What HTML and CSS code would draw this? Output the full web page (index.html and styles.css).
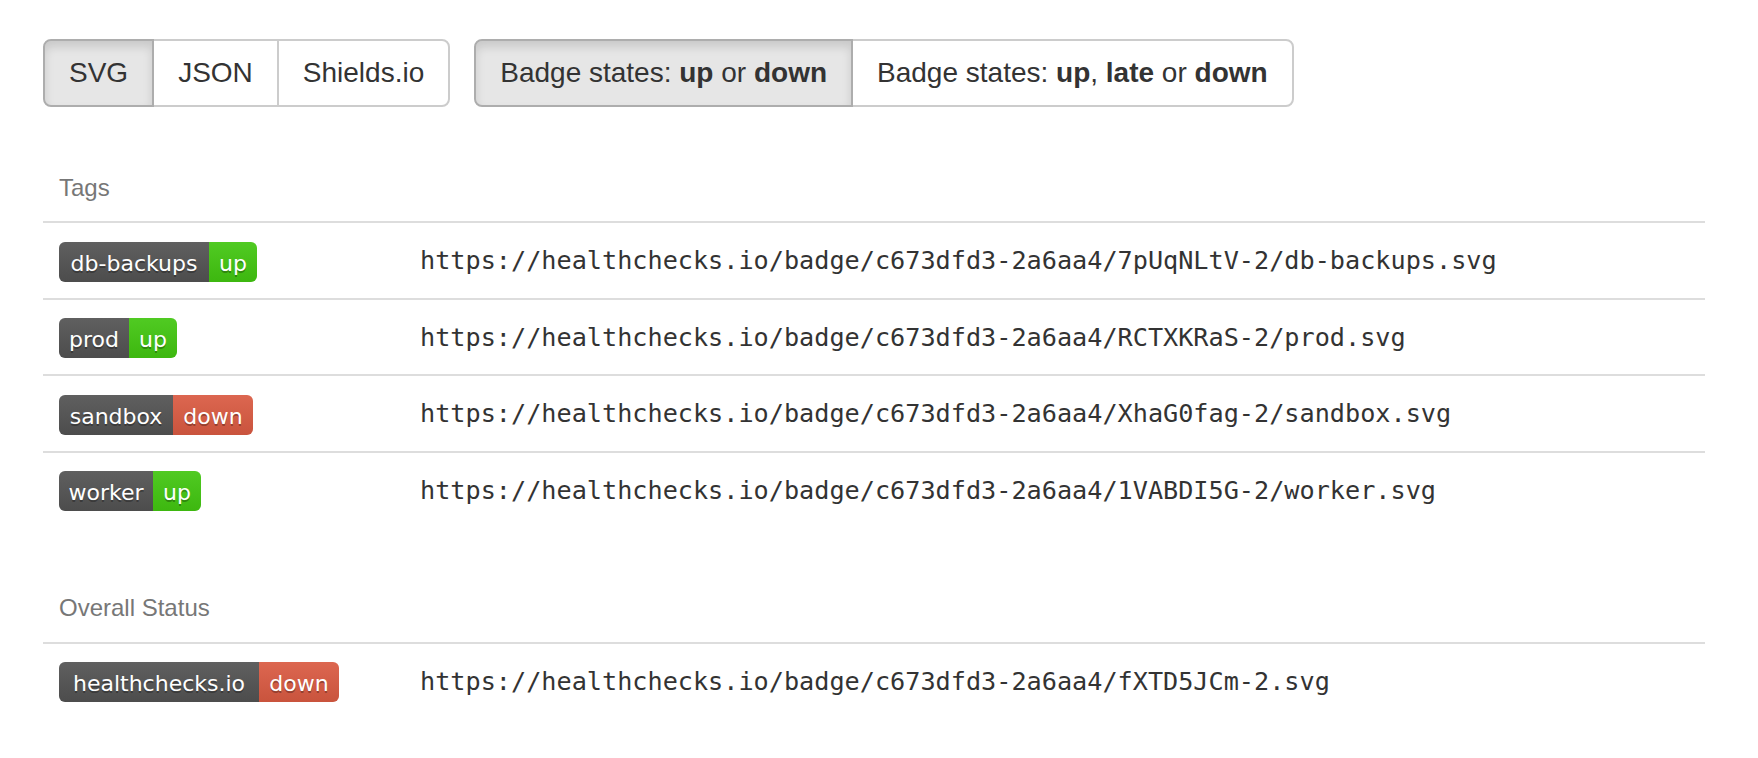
FILE: index.html
```html
<!DOCTYPE html>
<html lang="en">
<head>
<meta charset="utf-8">
<title>Badges</title>
<link rel="stylesheet" href="styles.css">
</head>
<body>
<div class="page">
  <div class="toolbar">
    <div class="btn-group">
      <button class="btn active">SVG</button>
      <button class="btn">JSON</button>
      <button class="btn">Shields.io</button>
    </div>
    <div class="btn-group">
      <button class="btn active">Badge states: <b>up</b> or <b>down</b></button>
      <button class="btn">Badge states: <b>up</b>, <b>late</b> or <b>down</b></button>
    </div>
  </div>

  <table class="badges">
    <colgroup><col class="col-badge"><col></colgroup>
    <tr><th colspan="2">Tags</th></tr>
    <tr>
      <td><div class="badge"><span class="label" style="width:150px">db-backups</span><span class="up" style="width:48px">up</span></div></td>
      <td class="url"><code>https://healthchecks.io/badge/c673dfd3-2a6aa4/7pUqNLtV-2/db-backups.svg</code></td>
    </tr>
    <tr>
      <td><div class="badge"><span class="label" style="width:70px">prod</span><span class="up" style="width:48px">up</span></div></td>
      <td class="url"><code>https://healthchecks.io/badge/c673dfd3-2a6aa4/RCTXKRaS-2/prod.svg</code></td>
    </tr>
    <tr>
      <td><div class="badge"><span class="label" style="width:114px">sandbox</span><span class="down" style="width:80px">down</span></div></td>
      <td class="url"><code>https://healthchecks.io/badge/c673dfd3-2a6aa4/XhaG0fag-2/sandbox.svg</code></td>
    </tr>
    <tr>
      <td><div class="badge"><span class="label" style="width:94px">worker</span><span class="up" style="width:48px">up</span></div></td>
      <td class="url"><code>https://healthchecks.io/badge/c673dfd3-2a6aa4/1VABDI5G-2/worker.svg</code></td>
    </tr>
    <tr><th colspan="2">Overall Status</th></tr>
    <tr>
      <td><div class="badge"><span class="label" style="width:200px">healthchecks.io</span><span class="down" style="width:80px">down</span></div></td>
      <td class="url"><code>https://healthchecks.io/badge/c673dfd3-2a6aa4/fXTD5JCm-2.svg</code></td>
    </tr>
  </table>
</div>
</body>
</html>
```

FILE: styles.css
```css
html, body {
  margin: 0;
  background: #fff;
}

body {
  font-family: "Liberation Sans", Arial, sans-serif;
  font-size: 28px;
  line-height: 40px;
  color: #333;
}

.page {
  padding: 39px 53px 0 43px;
}

.toolbar {
  display: flex;
  gap: 24px;
}

.btn-group {
  display: flex;
}

.btn {
  font: inherit;
  line-height: 40px;
  color: #333;
  background: #fff;
  border: 2px solid #ccc;
  border-radius: 0;
  padding: 12px 24px;
  margin: 0;
  cursor: pointer;
}

.btn + .btn {
  margin-left: -2px;
}

.btn:first-child {
  border-radius: 8px 0 0 8px;
}

.btn:last-child {
  border-radius: 0 8px 8px 0;
}

.btn.active {
  background: #e6e6e6;
  border-color: #adadad;
  box-shadow: inset 0 6px 10px rgba(0, 0, 0, 0.125);
  z-index: 1;
}

.btn b {
  font-weight: 700;
}

.badges {
  width: 1662px;
  table-layout: fixed;
  border-collapse: separate;
  border-spacing: 0;
}

.col-badge {
  width: 361px;
}

.badges th {
  text-align: left;
  font-weight: normal;
  color: #777;
  font-size: 24px;
  line-height: 34.29px;
  padding: 64px 16px 16px;
}

.badges td {
  border-top: 2px solid #ddd;
  padding: 16px;
  vertical-align: top;
}

.badges td.url {
  padding-top: 17px;
}

.badge {
  display: flex;
  width: fit-content;
  height: 40px;
  margin-top: 2.5px;
  border-radius: 6px;
  overflow: hidden;
  font-family: "DejaVu Sans", Verdana, sans-serif;
  font-size: 22px;
  color: #fff;
  text-shadow: 0 2px 0 rgba(1, 1, 1, 0.3);
}

.badge span {
  display: block;
  padding-top: 3px;
  line-height: 37px;
  text-align: center;
  white-space: nowrap;
}

.label {
  background: linear-gradient(rgba(187, 187, 187, 0.1), rgba(0, 0, 0, 0.1)), #555;
}

.up {
  background: linear-gradient(rgba(187, 187, 187, 0.1), rgba(0, 0, 0, 0.1)), #44cc11;
}

.down {
  background: linear-gradient(rgba(187, 187, 187, 0.1), rgba(0, 0, 0, 0.1)), #e05d44;
}

code {
  font-family: "DejaVu Sans Mono", monospace;
  font-size: 25.2px;
  color: #333;
}
```
